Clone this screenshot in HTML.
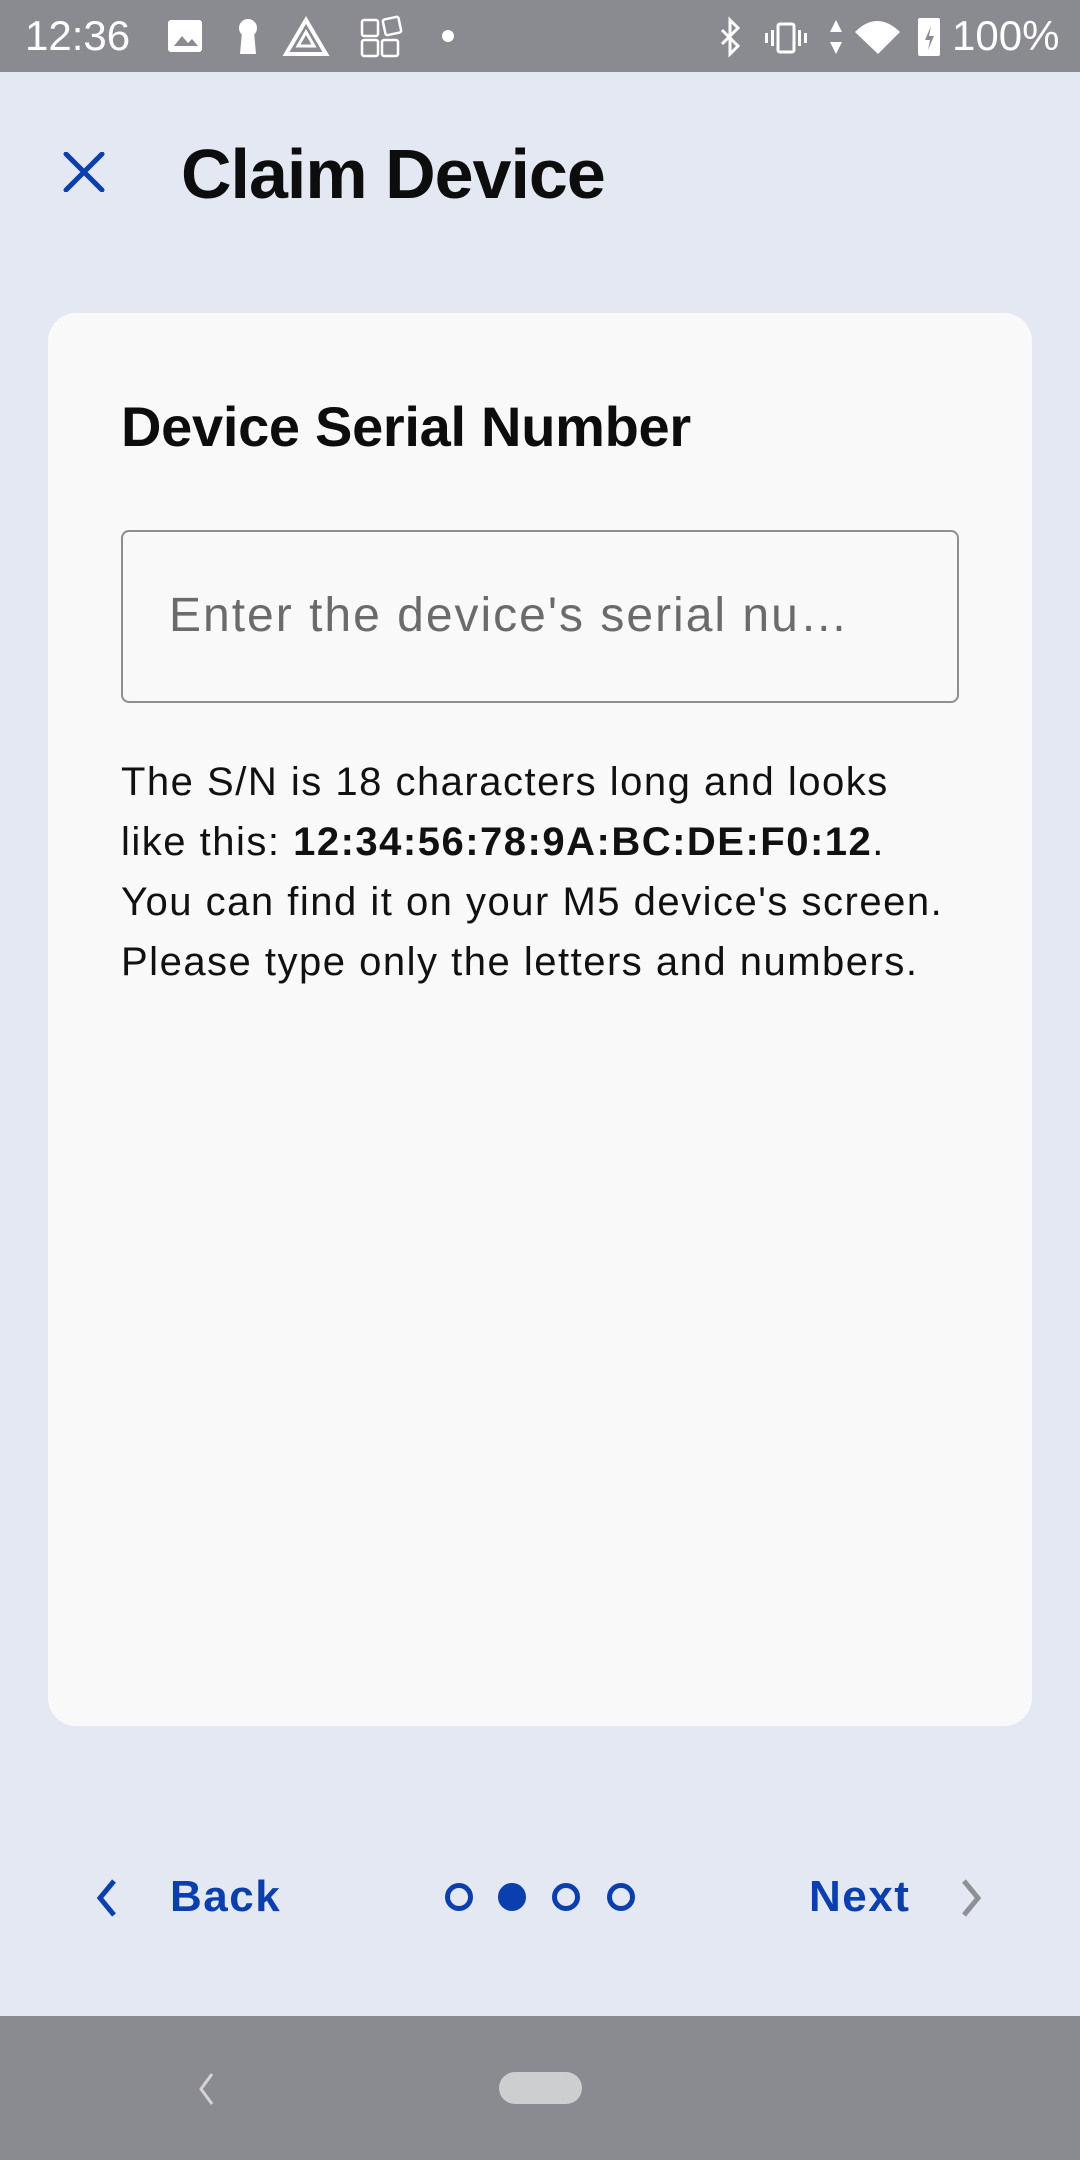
<!DOCTYPE html>
<html><head><meta charset="utf-8"><style>
*{margin:0;padding:0;box-sizing:border-box}
body{width:1080px;height:2160px;background:#e3e8f3;position:relative;overflow:hidden;font-family:"Liberation Sans",Roboto,sans-serif}
.a{position:absolute;white-space:nowrap}
.sb{position:absolute;left:0;top:0;width:1080px;height:72px;background:#8a8b90}
.nb{position:absolute;left:0;top:2016px;width:1080px;height:144px;background:#8a8b90}
.card{position:absolute;left:48px;top:313px;width:984px;height:1413px;background:#f9f9f9;border-radius:28px}
.inp{position:absolute;left:121px;top:530px;width:838px;height:173px;border:2px solid #8e8e8e;border-radius:8px}
.p{font-size:40px;color:#111;letter-spacing:1.5px}
.dot{position:absolute;top:1883px;width:28px;height:28px;border-radius:50%;border:5px solid #0b3fad}
</style></head><body>
<div class="sb"></div>
<div class="a" style="left:25px;top:12px;font-size:42px;color:#fff">12:36</div>
<svg class="a" style="left:160px;top:14px" width="260" height="46" viewBox="0 0 260 46">
<rect x="8" y="6" width="34" height="32" rx="3" fill="#fff"/><path d="M14 32l8-10 6 7 4-4 6 7z" fill="#8a8b90"/>
<circle cx="88" cy="14" r="9" fill="#fff"/><path d="M82 18h12l2 22h-16z" fill="#fff"/>
<path d="M146 6l20 34h-40z" fill="none" stroke="#fff" stroke-width="4"/><path d="M146 18l8 14h-16z" fill="none" stroke="#fff" stroke-width="3"/>
<rect x="202" y="6" width="16" height="16" rx="2" fill="none" stroke="#fff" stroke-width="2.5"/>
<rect x="224" y="4" width="16" height="16" rx="2" fill="none" stroke="#fff" stroke-width="2.5" transform="rotate(-12 232 12)"/>
<rect x="202" y="26" width="16" height="16" rx="2" fill="none" stroke="#fff" stroke-width="2.5"/>
<rect x="222" y="26" width="16" height="16" rx="2" fill="none" stroke="#fff" stroke-width="2.5"/>
</svg>
<div class="a" style="left:442px;top:30px;width:12px;height:12px;border-radius:50%;background:#fff"></div>
<svg class="a" style="left:712px;top:14px" width="240" height="46" viewBox="0 0 240 46">
<path d="M10 16l16 16-8 8V6l8 8-16 16" fill="none" stroke="#fff" stroke-width="3"/>
<rect x="66" y="10" width="16" height="28" rx="2" fill="none" stroke="#fff" stroke-width="3"/>
<rect x="59" y="16" width="3" height="16" fill="#fff"/><rect x="86" y="16" width="3" height="16" fill="#fff"/>
<rect x="53" y="19" width="3" height="10" fill="#fff"/><rect x="92" y="19" width="3" height="10" fill="#fff"/>
<path d="M124 6l6 12h-12zM124 40l6-12h-12z" fill="#fff"/>
<path d="M143 18q22-22 45 0l-22 22z" fill="#fff"/>
<rect x="206" y="4" width="22" height="38" rx="2" fill="#fff"/><path d="M219 12l-6 14h5l-2 10 6-14h-5z" fill="#8a8b90"/>
</svg>
<div class="a" style="left:952px;top:12px;font-size:42px;color:#fff">100%</div>

<svg class="a" style="left:62px;top:152px" width="44" height="40" viewBox="0 0 44 40"><path d="M4 2l36 36M40 2L4 38" stroke="#0b3fad" stroke-width="5" stroke-linecap="round"/></svg>
<div class="a" style="left:181px;top:134px;font-size:70px;font-weight:bold;color:#0d0d0d;letter-spacing:-1px">Claim Device</div>

<div class="card"></div>
<div class="a" style="left:121px;top:394px;font-size:56px;font-weight:bold;color:#0d0d0d;letter-spacing:-0.3px">Device Serial Number</div>
<div class="inp"></div>
<div class="a" style="left:169px;top:588px;font-size:48px;color:#6b6b6b;letter-spacing:2px">Enter the device's serial nu…</div>
<div class="a p" style="left:121px;top:760px">The S/N is 18 characters long and looks</div>
<div class="a p" style="left:121px;top:820px">like this: <b>12:34:56:78:9A:BC:DE:F0:12</b>.</div>
<div class="a p" style="left:121px;top:880px">You can find it on your M5 device's screen.</div>
<div class="a p" style="left:121px;top:940px">Please type only the letters and numbers.</div>

<svg class="a" style="left:94px;top:1878px" width="26" height="40" viewBox="0 0 26 40"><path d="M20 3L6 20l14 17" fill="none" stroke="#0b3fad" stroke-width="5"/></svg>
<div class="a" style="left:170px;top:1872px;font-size:44px;font-weight:bold;color:#0b3fad;letter-spacing:1.5px">Back</div>
<div class="dot" style="left:445px"></div>
<div class="dot" style="left:498px;background:#0b3fad"></div>
<div class="dot" style="left:552px"></div>
<div class="dot" style="left:607px"></div>
<div class="a" style="left:809px;top:1872px;font-size:44px;font-weight:bold;color:#0b3fad;letter-spacing:1.5px">Next</div>
<svg class="a" style="left:958px;top:1878px" width="26" height="40" viewBox="0 0 26 40"><path d="M6 3l14 17L6 37" fill="none" stroke="#8f9095" stroke-width="5"/></svg>

<div class="nb"></div>
<svg class="a" style="left:196px;top:2072px" width="20" height="34" viewBox="0 0 20 34"><path d="M16 2L5 17l11 15" fill="none" stroke="#d4d4d6" stroke-width="3"/></svg>
<div class="a" style="left:499px;top:2072px;width:83px;height:32px;border-radius:16px;background:#cdcecf"></div>
</body></html>
